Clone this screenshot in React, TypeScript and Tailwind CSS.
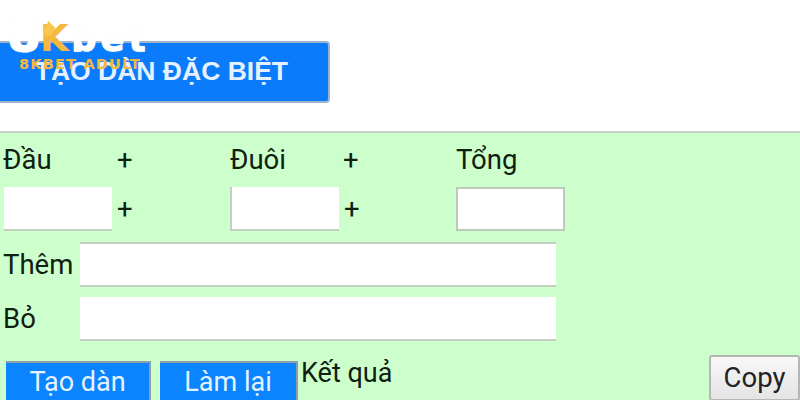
const font = "font-['Roboto',sans-serif]";

function Field({ className }: { className: string }) {
  return <input type="text" className={`h-[44px] bg-white outline-none ${className}`} />;
}

function Logo() {
  return (
    <div className="absolute left-[8px] top-[12px] w-[145px] select-none">
      <div className="flex h-[45px] items-baseline font-['DejaVu_Sans',sans-serif] leading-[46px] font-bold text-white [text-shadow:0_0_2px_#f3e4cf]">
        <span className="text-[46px] [-webkit-text-stroke:2px_white]">8</span>
        <span className="relative text-[37px] text-[#f5b83d] [text-shadow:none]">
          K
          <svg viewBox="0 0 20 16" className="absolute left-[1px] top-[4px] h-[16px] w-[18px]">
            <path d="M3 16 L2 5 L6 7 L8 0 L12 4 L16 8 L12 16 Z" fill="#f8c64e" />
          </svg>
        </span>
        <span className="ml-[3px] text-[34px] tracking-[5px] [-webkit-text-stroke:1.5px_white]">bet</span>
      </div>
      <div className="ml-[11px] font-['DejaVu_Sans',sans-serif] text-[14.5px] leading-[14px] font-bold tracking-[1.2px] whitespace-nowrap text-[#f5b83d]">
        8KBET ADULT
      </div>
    </div>
  );
}

export default function App() {
  return (
    <div className={`relative h-[400px] w-[800px] overflow-hidden bg-white ${font}`}>
      <div className="flex h-[131px] items-start pt-[41px]">
        <div className="flex h-[62px] w-[330px] items-center justify-end rounded-r-[4px] border-2 border-l-0 border-[#9fb4cc] bg-[#0a7cfb] pr-[40px] font-['Liberation_Sans',sans-serif] text-[26.5px] font-bold text-[#e6f1ff]">
          TẠO DÀN ĐẶC BIỆT
        </div>
      </div>

      <div className="h-[269px] border-t-2 border-[#c6d2c6] bg-[#ccffcc] text-[27.5px] leading-[30px] text-[#102010]">
        <div className="flex pt-[12px] pl-[3px]">
          <span className="w-[114px]">Đầu</span>
          <span className="w-[113px]">+</span>
          <span className="w-[113px]">Đuôi</span>
          <span className="w-[113px]">+</span>
          <span>Tổng</span>
        </div>

        <div className="mt-[12px] flex items-center pl-[4px]">
          <Field className="w-[108px] border-b-2 border-[#c4cfc4]" />
          <span className="w-[118px] pl-[5px]">+</span>
          <Field className="w-[109px] border-b-2 border-l-2 border-[#c4cfc4]" />
          <span className="w-[117px] pl-[5px]">+</span>
          <Field className="w-[109px] border-2 border-[#bccabc]" />
        </div>

        <div className="mt-[11px] flex items-center pl-[3px]">
          <span className="w-[77px]">Thêm</span>
          <Field className="h-[45px] w-[476px] border-t-2 border-b-2 border-[#c4cfc4]" />
        </div>

        <div className="mt-[10px] flex items-center pl-[3px]">
          <span className="w-[77px]">Bỏ</span>
          <Field className="w-[476px] border-b-2 border-[#c4cfc4]" />
        </div>

        <div className="mt-[20px] flex items-start pl-[6px]">
          <button className="h-[40px] w-[145px] border-t-2 border-r-2 border-[#8e9ea8] bg-[#0a84ff] text-center text-[27px] text-[#e6f3ff]">
            Tạo dàn
          </button>
          <button className="ml-[9px] h-[40px] w-[138px] border-t-2 border-r-2 border-[#8e9ea8] bg-[#0a84ff] text-center text-[27px] text-[#e6f3ff]">
            Làm lại
          </button>
          <span className="mt-[-3px] ml-[3px] text-[27px]">Kết quả</span>
          <button className="mt-[-6px] ml-auto h-[46px] w-[91px] rounded-[3px] border-2 border-[#b4b8b4] bg-gradient-to-b from-[#f8f8f8] to-[#e4e4e4] text-[#222]">
            Copy
          </button>
        </div>
      </div>

      <Logo />
    </div>
  );
}
